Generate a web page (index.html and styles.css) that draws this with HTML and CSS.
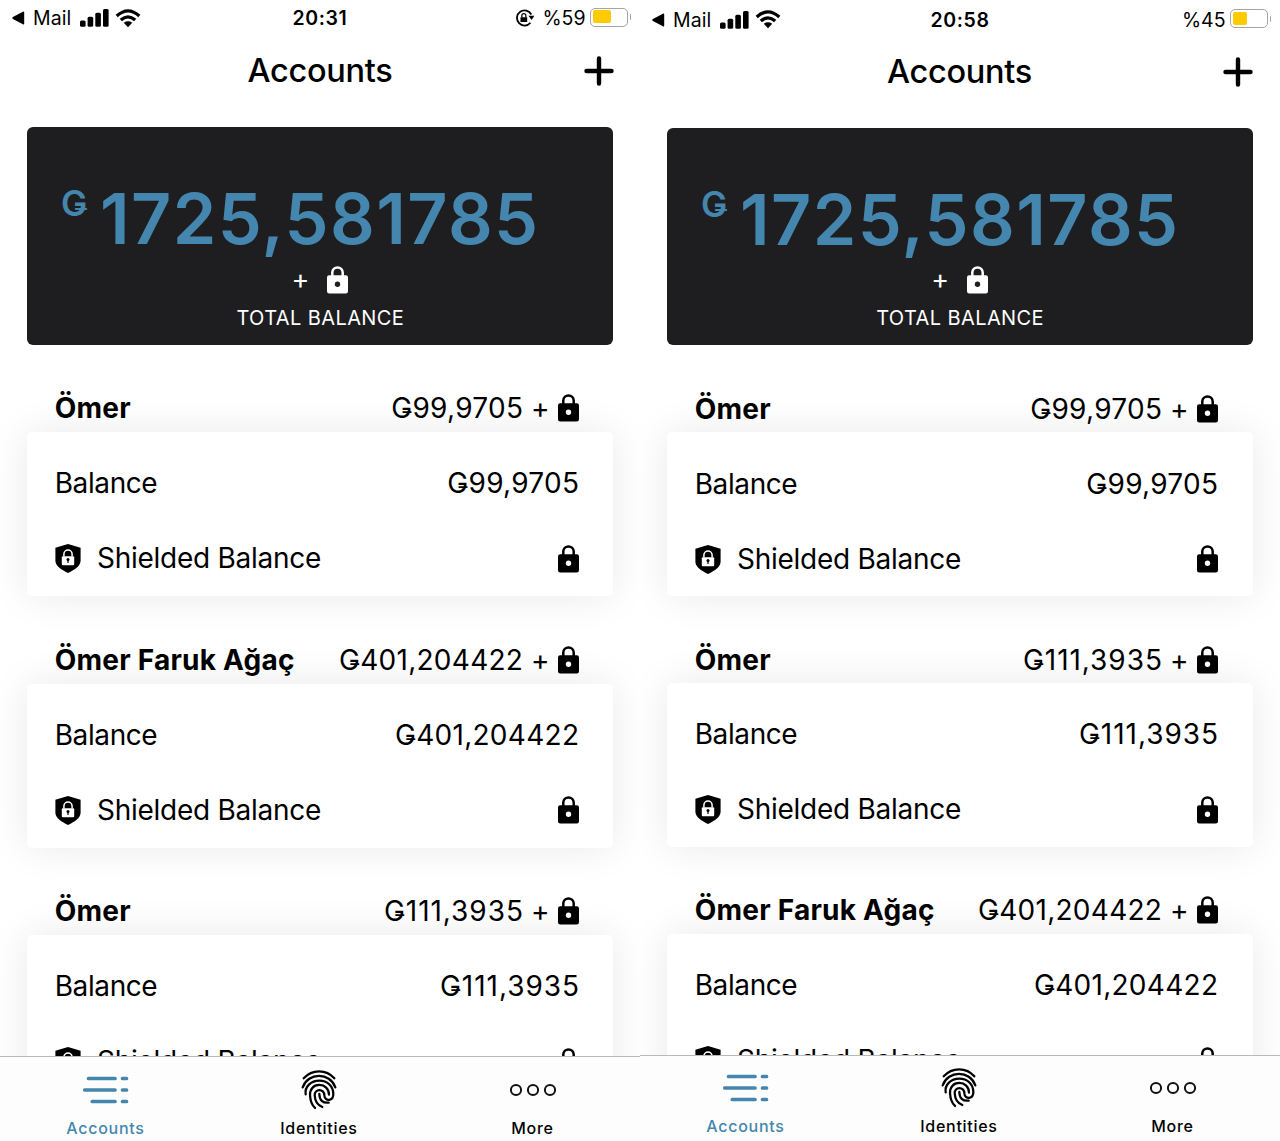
FILE: index.html
```html
<!DOCTYPE html>
<html lang="en">
<head>
<meta charset="utf-8">
<title>Accounts</title>
<link rel="stylesheet" href="styles.css">
</head>
<body>
<svg class="sprite" aria-hidden="true">
  <symbol id="back" viewBox="0 0 14 14"><path d="M12.2 1.6v10.8a.9.9 0 0 1-1.3.8L.9 7.9a1 1 0 0 1 0-1.8L10.9.8a.9.9 0 0 1 1.3.8z"/></symbol>
  <symbol id="signal" viewBox="0 0 29 18"><rect x="0" y="11.5" width="5.6" height="6.3" rx="1.5"/><rect x="7.6" y="7.8" width="5.6" height="10" rx="1.5"/><rect x="15.3" y="3.8" width="5.6" height="14" rx="1.5"/><rect x="23" y="0" width="5.6" height="17.8" rx="1.5"/></symbol>
  <symbol id="wifi" viewBox="0 0 26 19"><path d="M1.7 7Q13-3.2 24.3 7M5.8 11.1Q13 4.7 20.2 11.1" fill="none" stroke="#000" stroke-width="3.3"/><path d="M8.8 13.7Q13 10.8 17.2 13.7L13 18.2z"/></symbol>
  <symbol id="rotation" viewBox="0 0 19 17"><path d="M15.5 5.2A7.2 7.2 0 1 0 14.7 13" fill="none" stroke="#000" stroke-width="1.7"/><path d="M12.8 6.3h5.6l-2.6 4.1zM5.2 7.7h6.4v4.6H5.2z"/><path d="M6.5 8V6.2a1.9 1.9 0 0 1 3.8 0V8" fill="none" stroke="#000" stroke-width="1.2"/></symbol>
  <symbol id="plus" viewBox="0 0 30 30"><path d="M15 2.5v25M2.5 15h25" fill="none" stroke="#000" stroke-width="4.4" stroke-linecap="round"/></symbol>
  <symbol id="lock" viewBox="0 0 21 28"><path d="M5.3 10.5V6.6a5.2 5.2 0 0 1 10.4 0v3.9" fill="none" stroke="currentColor" stroke-width="2.5"/><path fill="currentColor" fill-rule="evenodd" d="M2.2 9.2h16.6A2.2 2.2 0 0 1 21 11.4v13.9a2.2 2.2 0 0 1-2.2 2.2H2.2A2.2 2.2 0 0 1 0 25.3V11.4a2.2 2.2 0 0 1 2.2-2.2zM10.5 15.6a2.7 2.7 0 1 0 0 5.4a2.7 2.7 0 1 0 0-5.4z"/></symbol>
  <symbol id="shield" viewBox="0 0 26 29"><path d="M13 0l12.6 3.8V16.5C25.6 22 20 25.5 13 29 6 25.5.4 22 .4 16.5V3.8z"/><path d="M8.9 12.5V10.2a4.1 4.1 0 0 1 8.2 0v2.3" fill="none" stroke="#fff" stroke-width="1.5"/><rect x="6.8" y="12.2" width="12.4" height="9" rx="1" fill="#fff"/><circle cx="13" cy="15.5" r="1.5"/><path d="M12.4 15.5h1.2v3.5h-1.2z"/></symbol>
  <symbol id="accounts" viewBox="0 0 46 30"><path d="M5.5 3.5h26.5M39.5 3.5h4M1.8 15H32M39.5 15h4M9.3 26.5H32M39.5 26.5h4" fill="none" stroke="#4486ae" stroke-width="3.7" stroke-linecap="round"/></symbol>
  <symbol id="finger" viewBox="30 24 116 130"><g fill="none" stroke="#000" stroke-width="6.8" stroke-linecap="round"><path d="M41 55C66 27 109 27 133 55"/><path d="M38 82C54 36 120 36 136 82"/><path d="M47 103C43 80 63 62 88 62C112 62 129 78 130 101C131 124 104 126 103 106C103 85 73 86 74 106C75 124 85 137 97 141"/><path d="M117 104C117 86 104 75 88 75C70 75 59 88 60 106C61 124 67 137 75 144"/><path d="M88 102C88 120 98 130 116 128"/></g></symbol>
  <symbol id="more" viewBox="0 0 48 14"><g fill="none" stroke="#111" stroke-width="2"><circle cx="7" cy="7" r="5.1"/><circle cx="24" cy="7" r="5.1"/><circle cx="41" cy="7" r="5.1"/></g></symbol>
</svg>

<main class="screens">
  <section class="phone phone-a">
    <div class="status">
      <div class="status-left"><svg class="i-back"><use href="#back"/></svg><span class="mail">Mail</span><svg class="i-signal"><use href="#signal"/></svg><svg class="i-wifi"><use href="#wifi"/></svg></div>
      <div class="time">20:31</div>
      <div class="status-right"><svg class="i-rotation"><use href="#rotation"/></svg><span class="percent">%59</span><span class="battery"><span class="charge" style="width:18px"></span></span><span class="battery-cap"></span></div>
    </div>
    <header class="titlebar"><h1>Accounts</h1><svg class="i-plus"><use href="#plus"/></svg></header>
    <div class="content">
      <div class="total">
        <div class="amount"><span class="unit">Ǥ</span><span class="number">1725,581785</span></div>
        <div class="extra"><span>+</span><svg class="i-lock"><use href="#lock"/></svg></div>
        <div class="caption">TOTAL BALANCE</div>
      </div>
      <div class="account">
        <div class="account-head"><h2>Ömer</h2><div class="sum"><span class="money">Ǥ99,9705</span><span class="and">+</span><svg class="i-lock"><use href="#lock"/></svg></div></div>
        <div class="card">
          <div class="row"><span class="label">Balance</span><span class="money">Ǥ99,9705</span></div>
          <div class="row"><span class="shielded"><svg class="i-shield"><use href="#shield"/></svg>Shielded Balance</span><svg class="i-lock"><use href="#lock"/></svg></div>
        </div>
      </div>
      <div class="account">
        <div class="account-head"><h2>Ömer Faruk Ağaç</h2><div class="sum"><span class="money">Ǥ401,204422</span><span class="and">+</span><svg class="i-lock"><use href="#lock"/></svg></div></div>
        <div class="card">
          <div class="row"><span class="label">Balance</span><span class="money">Ǥ401,204422</span></div>
          <div class="row"><span class="shielded"><svg class="i-shield"><use href="#shield"/></svg>Shielded Balance</span><svg class="i-lock"><use href="#lock"/></svg></div>
        </div>
      </div>
      <div class="account">
        <div class="account-head"><h2>Ömer</h2><div class="sum"><span class="money wide">Ǥ111,3935</span><span class="and">+</span><svg class="i-lock"><use href="#lock"/></svg></div></div>
        <div class="card">
          <div class="row"><span class="label">Balance</span><span class="money wide">Ǥ111,3935</span></div>
          <div class="row"><span class="shielded"><svg class="i-shield"><use href="#shield"/></svg>Shielded Balance</span><svg class="i-lock"><use href="#lock"/></svg></div>
        </div>
      </div>
    </div>
    <nav class="tabs">
      <div class="tab active"><svg class="i-accounts"><use href="#accounts"/></svg><span>Accounts</span></div>
      <div class="tab"><svg class="i-finger"><use href="#finger"/></svg><span>Identities</span></div>
      <div class="tab"><svg class="i-more"><use href="#more"/></svg><span>More</span></div>
    </nav>
  </section>

  <section class="phone phone-b">
    <div class="status">
      <div class="status-left"><svg class="i-back"><use href="#back"/></svg><span class="mail">Mail</span><svg class="i-signal"><use href="#signal"/></svg><svg class="i-wifi"><use href="#wifi"/></svg></div>
      <div class="time">20:58</div>
      <div class="status-right"><span class="percent">%45</span><span class="battery"><span class="charge" style="width:14px"></span></span><span class="battery-cap"></span></div>
    </div>
    <header class="titlebar"><h1>Accounts</h1><svg class="i-plus"><use href="#plus"/></svg></header>
    <div class="content">
      <div class="total">
        <div class="amount"><span class="unit">Ǥ</span><span class="number">1725,581785</span></div>
        <div class="extra"><span>+</span><svg class="i-lock"><use href="#lock"/></svg></div>
        <div class="caption">TOTAL BALANCE</div>
      </div>
      <div class="account">
        <div class="account-head"><h2>Ömer</h2><div class="sum"><span class="money">Ǥ99,9705</span><span class="and">+</span><svg class="i-lock"><use href="#lock"/></svg></div></div>
        <div class="card">
          <div class="row"><span class="label">Balance</span><span class="money">Ǥ99,9705</span></div>
          <div class="row"><span class="shielded"><svg class="i-shield"><use href="#shield"/></svg>Shielded Balance</span><svg class="i-lock"><use href="#lock"/></svg></div>
        </div>
      </div>
      <div class="account">
        <div class="account-head"><h2>Ömer</h2><div class="sum"><span class="money wide">Ǥ111,3935</span><span class="and">+</span><svg class="i-lock"><use href="#lock"/></svg></div></div>
        <div class="card">
          <div class="row"><span class="label">Balance</span><span class="money wide">Ǥ111,3935</span></div>
          <div class="row"><span class="shielded"><svg class="i-shield"><use href="#shield"/></svg>Shielded Balance</span><svg class="i-lock"><use href="#lock"/></svg></div>
        </div>
      </div>
      <div class="account">
        <div class="account-head"><h2>Ömer Faruk Ağaç</h2><div class="sum"><span class="money">Ǥ401,204422</span><span class="and">+</span><svg class="i-lock"><use href="#lock"/></svg></div></div>
        <div class="card">
          <div class="row"><span class="label">Balance</span><span class="money">Ǥ401,204422</span></div>
          <div class="row"><span class="shielded"><svg class="i-shield"><use href="#shield"/></svg>Shielded Balance</span><svg class="i-lock"><use href="#lock"/></svg></div>
        </div>
      </div>
    </div>
    <nav class="tabs">
      <div class="tab active"><svg class="i-accounts"><use href="#accounts"/></svg><span>Accounts</span></div>
      <div class="tab"><svg class="i-finger"><use href="#finger"/></svg><span>Identities</span></div>
      <div class="tab"><svg class="i-more"><use href="#more"/></svg><span>More</span></div>
    </nav>
  </section>
</main>
</body>
</html>
```
FILE: styles.css
```css
* { box-sizing: border-box; }
body { margin: 0; background: #fff; color: #000; font-family: Inter, "Liberation Sans", sans-serif; }
svg { display: block; flex: none; }
h1, h2 { margin: 0; }
.sprite { display: none; }

.screens { display: grid; grid-template-columns: 640px 640px; height: 1141px; overflow: hidden; }
.phone { display: flex; flex-direction: column; height: 1141px; overflow: hidden; min-width: 0; white-space: nowrap; }
.phone-a { --top: 0px; --total: 218px; --head: 87.5px; --card: 164px; --side-r: 27px; --inset-r: 34px; --tabs: 85px; --tab-row: 65.5px; --tab-label: 11px; }
.phone-b { --top: 1.5px; --total: 217.3px; --head: 87px; --card: 163.7px; --side-r: 27.5px; --inset-r: 34.5px; --tabs: 86px; --tab-row: 63.5px; --tab-label: 13px; }

.status { display: grid; grid-template-columns: 1fr auto 1fr; align-items: center; height: 36px; margin-top: var(--top); padding: 0 10px 0 12px; font-size: 19.5px; line-height: 36px; flex: none; }
.status-left, .status-right { display: flex; align-items: center; }
.status-right { justify-content: flex-end; }
.mail { margin: 0 8.5px 0 7px; letter-spacing: .1px; }
.time { font-weight: 600; letter-spacing: .6px; margin-left: -2px; }
.i-back { width: 14px; height: 14px; }
.i-signal { width: 29px; height: 18px; margin-right: 6px; }
.i-wifi { width: 26px; height: 19px; }
.i-rotation { width: 20px; height: 18px; margin-right: 7.5px; }
.percent { margin-right: 4.5px; }
.battery { width: 38px; height: 19px; border: 1.5px solid #a5a5a8; border-radius: 5px; padding: 1.5px; margin-top: -2px; }
.charge { display: block; height: 13px; border-radius: 2px; background: #fecb00; }
.battery-cap { width: 1.5px; height: 6px; margin: -2px -1px 0 1.5px; background: #a5a5a8; border-radius: 0 2px 2px 0; }

.titlebar { display: grid; grid-template-columns: 1fr auto 1fr; align-items: center; height: 68px; padding: 1.5px 26.5px 0; flex: none; }
.phone-b .titlebar { padding-right: 27.3px; padding-left: 26.3px; }
.titlebar h1 { grid-column: 2; font-size: 32.5px; font-weight: 500; line-height: 66px; letter-spacing: -.3px; }
.i-plus { width: 30px; height: 30px; justify-self: end; }

.content { flex: 1; min-height: 0; overflow: hidden; padding: 22.5px var(--side-r) 0 26.7px; }
.total { height: var(--total); padding-top: 57px; border-radius: 6px; background: #1e1e20; color: #fff; }
.amount { display: flex; height: 70px; padding-left: 34.3px; color: #4486ae; }
.unit { width: 39px; font-size: 35px; font-weight: 600; line-height: 38px; }
.number { font-size: 70px; font-weight: 600; line-height: 70px; letter-spacing: 1.4px; }
.extra { display: flex; align-items: center; justify-content: center; gap: 18px; height: 28px; margin-top: 12px; font-size: 27px; line-height: 28px; }
.phone-b .extra { margin-top: 11px; }
.caption { margin-top: 12px; padding-left: 1px; text-align: center; font-size: 20px; line-height: 24px; letter-spacing: .4px; }
.phone-b .caption { margin-top: 12.3px; }

.account-head { height: var(--head); padding: 39.8px var(--inset-r) 0 28px; display: flex; justify-content: space-between; align-items: flex-start; font-size: 28px; line-height: 48px; }
.account-head h2 { font-size: 28px; font-weight: 700; letter-spacing: .24px; }
.sum { display: flex; align-items: center; }
.money { letter-spacing: .28px; margin-right: -.28px; }
.wide { letter-spacing: .95px; margin-right: -.95px; }
.and { margin: 0 8.5px 0 8px; }
.card { height: var(--card); padding: 14.4px var(--inset-r) 0 28px; border-radius: 5px; background: #fff; box-shadow: 0 0 40px rgba(0, 0, 0, .09); }
.row { display: flex; align-items: center; justify-content: space-between; height: 75px; font-size: 28px; line-height: 75px; }
.label { letter-spacing: -.4px; }
.shielded { display: flex; align-items: center; gap: 16.3px; letter-spacing: -.27px; }
.i-lock { width: 21px; height: 28px; }
.i-shield { width: 26px; height: 29px; }

.tabs { display: grid; grid-template-columns: repeat(3, 213.5px); height: var(--tabs); border-top: 1px solid #b9b9b9; background: #fdfdfd; flex: none; }
.tab { display: grid; grid-template-rows: var(--tab-row) var(--tab-label); justify-items: center; align-items: center; padding-right: 2.5px; font-size: 16px; line-height: 11px; font-weight: 500; letter-spacing: .72px; }
.active { color: #4486ae; }
.i-accounts { width: 46px; height: 30px; }
.i-finger { width: 38.7px; height: 43.3px; }
.i-more { width: 48px; height: 14px; }
```
